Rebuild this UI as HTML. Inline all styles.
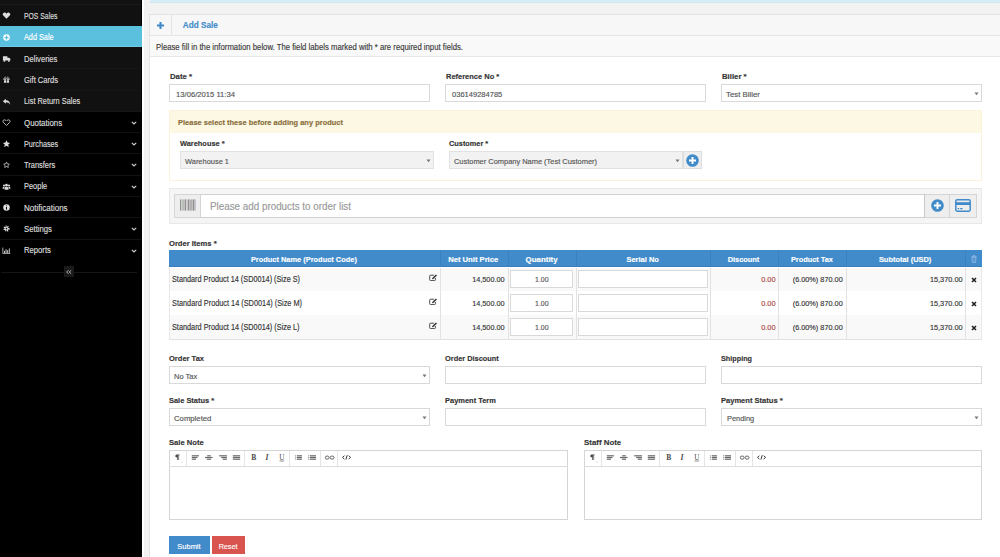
<!DOCTYPE html>
<html><head><meta charset="utf-8"><title>Add Sale</title>
<style>
html,body{margin:0;padding:0;width:1000px;height:557px;overflow:hidden;background:#fff;}
body{position:relative;font-family:"Liberation Sans", sans-serif;}
.a{position:absolute;}
.t{position:absolute;white-space:nowrap;line-height:1;font-family:"Liberation Sans", sans-serif;-webkit-text-stroke:0.15px currentColor;}
</style></head><body>
<svg width="0" height="0" style="position:absolute"><defs>
<g id="i-heart"><path d="M5 7.6 L1.4 4 C0.3 2.9 0.6 1 2.2 0.7 C3.4 0.5 4.3 1.2 5 2 C5.7 1.2 6.6 0.5 7.8 0.7 C9.4 1 9.7 2.9 8.6 4 Z" stroke="none"/></g>
<g id="i-hearto"><path d="M5 7.2 L1.6 3.9 C0.6 2.9 0.9 1.2 2.3 1 C3.4 0.8 4.3 1.5 5 2.3 C5.7 1.5 6.6 0.8 7.7 1 C9.1 1.2 9.4 2.9 8.4 3.9 Z" fill="none" stroke-width="0.9"/></g>
<g id="i-pluscircle"><circle cx="5" cy="4" r="3.6" stroke="none"/><path d="M5 1.8V6.2M2.8 4H7.2" stroke="#5bc0de" stroke-width="1.5"/></g>
<g id="i-truck"><path d="M1 1.5H6V6H1Z M6 3H8.2L9.3 4.5V6H6Z" stroke="none"/><circle cx="2.7" cy="6.6" r="1" stroke="none"/><circle cx="7.6" cy="6.6" r="1" stroke="none"/></g>
<g id="i-gift"><path d="M1.5 2.8H8.5V4.3H1.5Z M2.2 4.6H7.8V7.6H2.2Z" stroke="none"/><path d="M5 2.8V7.6" stroke="#111" stroke-width="0.8"/><path d="M5 2.6C4 0.5 2.5 1 3 2.5 M5 2.6C6 0.5 7.5 1 7 2.5" fill="none" stroke-width="0.7"/></g>
<g id="i-reply"><path d="M1 3.5L4.2 0.8V2.4C7.5 2.4 9 4.5 9 7.5C8 5.5 6.5 4.7 4.2 4.7V6.3Z" stroke="none"/></g>
<g id="i-star"><path d="M5 0.3L6.2 2.9L9 3.2L6.9 5.1L7.5 7.9L5 6.5L2.5 7.9L3.1 5.1L1 3.2L3.8 2.9Z" stroke="none"/></g>
<g id="i-staro"><path d="M5 1.2L6 3.3L8.2 3.6L6.5 5.1L7 7.2L5 6.1L3 7.2L3.5 5.1L1.8 3.6L4 3.3Z" fill="none" stroke-width="0.8"/></g>
<g id="i-users"><circle cx="5" cy="2.4" r="1.5" stroke="none"/><circle cx="2.2" cy="2.8" r="1.1" stroke="none"/><circle cx="7.8" cy="2.8" r="1.1" stroke="none"/><path d="M2.8 7.5C2.8 5 3.6 4.3 5 4.3C6.4 4.3 7.2 5 7.2 7.5Z M0.6 6.5C0.6 4.8 1.2 4.2 2.2 4.2C2.8 4.2 3 4.4 3 4.4C2.5 5 2.4 5.8 2.4 6.5Z M9.4 6.5C9.4 4.8 8.8 4.2 7.8 4.2C7.2 4.2 7 4.4 7 4.4C7.5 5 7.6 5.8 7.6 6.5Z" stroke="none"/></g>
<g id="i-info"><circle cx="5" cy="4" r="3.6" stroke="none"/><path d="M5 3.4V6.2M5 1.7V2.5" stroke="#000" stroke-width="1.1"/></g>
<g id="i-cog"><circle cx="5" cy="4" r="2.6" fill="none" stroke-width="1.6" stroke-dasharray="1.1 0.9"/><circle cx="5" cy="4" r="2.1" stroke="none"/><circle cx="5" cy="4" r="0.9" fill="#000" stroke="none"/></g>
<g id="i-chart"><path d="M0.9 0.6V7.3H9.3" fill="none" stroke-width="0.8"/><path d="M2.2 4.2H3.2V6.8H2.2Z M4 2.4H5V6.8H4Z M5.8 3.6H6.8V6.8H5.8Z M7.6 1.6H8.6V6.8H7.6Z" stroke="none"/></g>
<g id="i-bluplus"><circle cx="6.5" cy="6.5" r="6.3" fill="#428bca"/><path d="M6.5 3V10M3 6.5H10" stroke="#fff" stroke-width="1.9"/></g>
<g id="i-barcode"><rect x="0" y="0" width="16" height="12" fill="#fff"/><rect x="0.3" y="0.3" width="0.8" height="11.4" fill="#666"/><rect x="1.6" y="0.3" width="0.5" height="11.4" fill="#8a8"/><rect x="2.6" y="0.3" width="0.9" height="11.4" fill="#777"/><rect x="4.0" y="0.3" width="0.6" height="11.4" fill="#999"/><rect x="5.1" y="0.3" width="1.0" height="11.4" fill="#888"/><rect x="6.6" y="0.3" width="0.6" height="11.4" fill="#a9a"/><rect x="7.7" y="0.3" width="1.1" height="11.4" fill="#777"/><rect x="9.3" y="0.3" width="0.6" height="11.4" fill="#999"/><rect x="10.4" y="0.3" width="1.2" height="11.4" fill="#808080"/><rect x="12.1" y="0.3" width="0.6" height="11.4" fill="#999"/><rect x="13.2" y="0.3" width="1.1" height="11.4" fill="#777"/><rect x="14.7" y="0.3" width="0.8" height="11.4" fill="#889"/></g>
<g id="i-card"><rect x="0.8" y="0.8" width="14.4" height="11.4" rx="1.4" fill="none" stroke="#428bca" stroke-width="1.5"/><rect x="0.8" y="3.2" width="14.4" height="2.8" fill="#428bca"/><path d="M2.6 9.6H4.2M5.2 9.6H7.6" stroke="#428bca" stroke-width="1.1"/></g>
<g id="i-trash"><path d="M0.4 1.6H5.6 M2 1.4V0.6H4V1.4" fill="none" stroke="#8fb8e2" stroke-width="0.8"/><path d="M1 2.3H5L4.6 7.4H1.4Z" fill="none" stroke="#8fb8e2" stroke-width="0.9"/><path d="M3 3V6.6" stroke="#8fb8e2" stroke-width="0.6"/></g>
<g id="i-edit"><path d="M5 1.2H1.6Q0.7 1.2 0.7 2.1V5.8Q0.7 6.6 1.6 6.6H5.6Q6.4 6.6 6.4 5.8V4" fill="none" stroke="#444" stroke-width="0.95"/><path d="M3 5.2L3.3 3.9L6.9 0.4L8 1.5L4.4 5Z" fill="#333"/></g>
<g id="i-toolbar" stroke="none">
  <path d="M8.2 4.4H10.6V5.2H10.1V10H9.4V5.2H8.9V10H8.2V7.4C6.9 7.3 6.3 6.6 6.3 5.9C6.3 5 7 4.4 8.2 4.4Z" fill="#444"/>
  <rect x="12.6" y="11.7" width="0.8" height="0.8" fill="#aaa"/>
  <g fill="#6a6a6a">
  <rect x="22.8" y="5.2" width="7.1" height="1.2"/><rect x="22.8" y="6.9" width="5.7" height="1.2"/><rect x="22.8" y="8.6" width="4.2" height="1.2"/>
  <rect x="38.2" y="5.2" width="3.6" height="1.2"/><rect x="36" y="6.9" width="7.5" height="1.2"/><rect x="37.8" y="8.6" width="4.2" height="1.2"/>
  <rect x="50.2" y="5.2" width="7.7" height="1.2"/><rect x="52.2" y="6.9" width="5.7" height="1.2"/><rect x="53.7" y="8.6" width="4.2" height="1.2"/>
  <rect x="63.8" y="5.2" width="7.3" height="1.2"/><rect x="63.8" y="6.9" width="7.3" height="1.2"/><rect x="63.8" y="8.6" width="7.3" height="1.2"/>
  <rect x="125.9" y="5.2" width="1.3" height="1.2" fill="#aaa"/><rect x="127.9" y="5.2" width="5" height="1.2"/><rect x="125.9" y="6.9" width="1.3" height="1.2" fill="#aaa"/><rect x="127.9" y="6.9" width="5" height="1.2"/><rect x="125.9" y="8.6" width="1.3" height="1.2" fill="#aaa"/><rect x="127.9" y="8.6" width="5" height="1.2"/>
  <rect x="138.9" y="5.2" width="1.5" height="1.2" fill="#aaa"/><rect x="141" y="5.2" width="6" height="1.2"/><rect x="138.9" y="6.9" width="1.5" height="1.2" fill="#aaa"/><rect x="141" y="6.9" width="6" height="1.2"/><rect x="138.9" y="8.6" width="1.5" height="1.2" fill="#aaa"/><rect x="141" y="8.6" width="6" height="1.2"/>
  </g>
  <text x="82.2" y="10.2" font-family="Liberation Serif" font-size="7.6" font-weight="bold" fill="#4a4a4a">B</text>
  <text x="96.6" y="10.2" font-family="Liberation Serif" font-size="7.6" font-style="italic" font-weight="bold" fill="#4a4a4a">I</text>
  <text x="110.2" y="9.8" font-family="Liberation Serif" font-size="7.2" fill="#4a4a4a">U</text>
  <rect x="110.5" y="10.6" width="4.6" height="0.8" fill="#777"/>
  <g fill="none" stroke="#555" stroke-width="0.9"><ellipse cx="158.2" cy="7.6" rx="1.9" ry="1.6"/><ellipse cx="163.1" cy="7.6" rx="1.9" ry="1.6"/></g>
  <rect x="164.3" y="11.8" width="0.8" height="0.8" fill="#aaa"/>
  <path d="M175.4 5.7L173.5 7.4L175.4 9.1 M179.7 5.7L181.6 7.4L179.7 9.1 M178.2 5.2L176.9 9.6" fill="none" stroke="#3a3a3a" stroke-width="1"/>
</g>
</defs></svg>
<div class="a" style="left:0px;top:0px;width:142.00px;height:557.00px;background:#000"></div>
<div class="a" style="left:0px;top:0px;width:141.00px;height:4.00px;background:#111"></div>
<div class="a" style="left:0px;top:4px;width:141.00px;height:22.00px;background:#111"></div>
<div class="a" style="left:0px;top:26px;width:142.00px;height:21.00px;background:#5bc0de"></div>
<div class="a" style="left:0px;top:47px;width:141.00px;height:21.00px;background:#111"></div>
<div class="a" style="left:0px;top:68px;width:141.00px;height:22.00px;background:#111"></div>
<div class="a" style="left:0px;top:90px;width:141.00px;height:21.00px;background:#111"></div>
<div class="a" style="left:0px;top:111px;width:141.00px;height:21.00px;background:#000"></div>
<div class="a" style="left:0px;top:132px;width:141.00px;height:21.00px;background:#000"></div>
<div class="a" style="left:0px;top:153px;width:141.00px;height:22.00px;background:#000"></div>
<div class="a" style="left:0px;top:175px;width:141.00px;height:21.00px;background:#000"></div>
<div class="a" style="left:0px;top:196px;width:141.00px;height:21.00px;background:#000"></div>
<div class="a" style="left:0px;top:217px;width:141.00px;height:22.00px;background:#000"></div>
<div class="a" style="left:0px;top:239px;width:141.00px;height:21.00px;background:#000"></div>
<div class="a" style="left:0px;top:46px;width:142.00px;height:1.00px;background:#6fcbe8"></div>
<div class="a" style="left:0px;top:68px;width:141.00px;height:1.00px;background:#161616"></div>
<div class="a" style="left:0px;top:90px;width:141.00px;height:1.00px;background:#161616"></div>
<div class="a" style="left:0px;top:111px;width:141.00px;height:1.00px;background:#161616"></div>
<div class="a" style="left:0px;top:132px;width:141.00px;height:1.00px;background:#121212"></div>
<div class="a" style="left:0px;top:153px;width:141.00px;height:1.00px;background:#121212"></div>
<div class="a" style="left:0px;top:175px;width:141.00px;height:1.00px;background:#121212"></div>
<div class="a" style="left:0px;top:196px;width:141.00px;height:1.00px;background:#121212"></div>
<div class="a" style="left:0px;top:217px;width:141.00px;height:1.00px;background:#121212"></div>
<div class="a" style="left:0px;top:239px;width:141.00px;height:1.00px;background:#121212"></div>
<div class="a" style="left:0px;top:4px;width:141.00px;height:1.00px;background:#1b1b1b"></div>
<div class="t" style="left:24.00px;top:12.09px;font-size:8.4px;color:#ddd;transform:scaleX(0.8153);transform-origin:left 0;">POS Sales</div>
<svg class="a" style="left:2px;top:12.30px" width="9" height="7.2" viewBox="0 0 10 8"><use href="#i-heart" fill="#ddd" stroke="#ddd"/></svg>
<div class="t" style="left:24.00px;top:33.39px;font-size:8.4px;color:#fff;transform:scaleX(0.8706);transform-origin:left 0;">Add Sale</div>
<svg class="a" style="left:2px;top:33.60px" width="9" height="7.2" viewBox="0 0 10 8"><use href="#i-pluscircle" fill="#fff" stroke="#fff"/></svg>
<div class="t" style="left:24.00px;top:54.69px;font-size:8.4px;color:#ddd;transform:scaleX(0.9081);transform-origin:left 0;">Deliveries</div>
<svg class="a" style="left:2px;top:54.90px" width="9" height="7.2" viewBox="0 0 10 8"><use href="#i-truck" fill="#ddd" stroke="#ddd"/></svg>
<div class="t" style="left:24.00px;top:75.99px;font-size:8.4px;color:#ddd;transform:scaleX(0.9018);transform-origin:left 0;">Gift Cards</div>
<svg class="a" style="left:2px;top:76.20px" width="9" height="7.2" viewBox="0 0 10 8"><use href="#i-gift" fill="#ddd" stroke="#ddd"/></svg>
<div class="t" style="left:24.00px;top:97.29px;font-size:8.4px;color:#ddd;transform:scaleX(0.8811);transform-origin:left 0;">List Return Sales</div>
<svg class="a" style="left:2px;top:97.50px" width="9" height="7.2" viewBox="0 0 10 8"><use href="#i-reply" fill="#ddd" stroke="#ddd"/></svg>
<div class="t" style="left:24.00px;top:118.59px;font-size:8.4px;color:#ddd;transform:scaleX(0.9428);transform-origin:left 0;">Quotations</div>
<svg class="a" style="left:2px;top:118.80px" width="9" height="7.2" viewBox="0 0 10 8"><use href="#i-hearto" fill="#ddd" stroke="#ddd"/></svg>
<svg class="a" style="left:130.5px;top:120.80px" width="6" height="4" viewBox="0 0 6 4"><path d="M0.8 0.8 L3 3 L5.2 0.8" fill="none" stroke="#ccc" stroke-width="1.2"/></svg>
<div class="t" style="left:24.00px;top:139.89px;font-size:8.4px;color:#ddd;transform:scaleX(0.8641);transform-origin:left 0;">Purchases</div>
<svg class="a" style="left:2px;top:140.10px" width="9" height="7.2" viewBox="0 0 10 8"><use href="#i-star" fill="#ddd" stroke="#ddd"/></svg>
<svg class="a" style="left:130.5px;top:142.10px" width="6" height="4" viewBox="0 0 6 4"><path d="M0.8 0.8 L3 3 L5.2 0.8" fill="none" stroke="#ccc" stroke-width="1.2"/></svg>
<div class="t" style="left:24.00px;top:161.19px;font-size:8.4px;color:#ddd;transform:scaleX(0.8898);transform-origin:left 0;">Transfers</div>
<svg class="a" style="left:2px;top:161.40px" width="9" height="7.2" viewBox="0 0 10 8"><use href="#i-staro" fill="#ddd" stroke="#ddd"/></svg>
<svg class="a" style="left:130.5px;top:163.40px" width="6" height="4" viewBox="0 0 6 4"><path d="M0.8 0.8 L3 3 L5.2 0.8" fill="none" stroke="#ccc" stroke-width="1.2"/></svg>
<div class="t" style="left:24.00px;top:182.49px;font-size:8.4px;color:#ddd;transform:scaleX(0.8896);transform-origin:left 0;">People</div>
<svg class="a" style="left:2px;top:182.70px" width="9" height="7.2" viewBox="0 0 10 8"><use href="#i-users" fill="#ddd" stroke="#ddd"/></svg>
<svg class="a" style="left:130.5px;top:184.70px" width="6" height="4" viewBox="0 0 6 4"><path d="M0.8 0.8 L3 3 L5.2 0.8" fill="none" stroke="#ccc" stroke-width="1.2"/></svg>
<div class="t" style="left:24.00px;top:203.79px;font-size:8.4px;color:#ddd;transform:scaleX(0.9556);transform-origin:left 0;">Notifications</div>
<svg class="a" style="left:2px;top:204.00px" width="9" height="7.2" viewBox="0 0 10 8"><use href="#i-info" fill="#ddd" stroke="#ddd"/></svg>
<div class="t" style="left:24.00px;top:225.09px;font-size:8.4px;color:#ddd;transform:scaleX(0.9251);transform-origin:left 0;">Settings</div>
<svg class="a" style="left:2px;top:225.30px" width="9" height="7.2" viewBox="0 0 10 8"><use href="#i-cog" fill="#ddd" stroke="#ddd"/></svg>
<svg class="a" style="left:130.5px;top:227.30px" width="6" height="4" viewBox="0 0 6 4"><path d="M0.8 0.8 L3 3 L5.2 0.8" fill="none" stroke="#ccc" stroke-width="1.2"/></svg>
<div class="t" style="left:24.00px;top:246.39px;font-size:8.4px;color:#ddd;transform:scaleX(0.9172);transform-origin:left 0;">Reports</div>
<svg class="a" style="left:2px;top:246.60px" width="9" height="7.2" viewBox="0 0 10 8"><use href="#i-chart" fill="#ddd" stroke="#ddd"/></svg>
<svg class="a" style="left:130.5px;top:248.60px" width="6" height="4" viewBox="0 0 6 4"><path d="M0.8 0.8 L3 3 L5.2 0.8" fill="none" stroke="#ccc" stroke-width="1.2"/></svg>
<div class="a" style="left:1px;top:272px;width:136.00px;height:1.00px;background:#161616"></div>
<div class="a" style="left:64px;top:266px;width:10.00px;height:11.00px;background:#1a1a1a"></div>
<svg class="a" style="left:65px;top:268px" width="8" height="8" viewBox="0 0 8 8"><path d="M3.6 2.4 L1.6 4 L3.6 5.6 M6.2 2.4 L4.2 4 L6.2 5.6" fill="none" stroke="#bbb" stroke-width="0.9"/></svg>
<div class="a" style="left:142px;top:0px;width:2.00px;height:557.00px;background:#fff"></div>
<div class="a" style="left:144px;top:0px;width:856.00px;height:557.00px;background:#f2f2f2"></div>
<div class="a" style="left:150px;top:0px;width:850.00px;height:3.00px;background:#d9edf7"></div>
<div class="a" style="left:150px;top:2px;width:850.00px;height:1.00px;background:#cde8f3"></div>
<div class="a" style="left:149px;top:14px;width:851.00px;height:543.00px;background:#fff;border-left:1px solid #e3e3e3;border-top:1px solid #e3e3e3"></div>
<div class="a" style="left:150px;top:15px;width:850.00px;height:20.00px;background:#f7f7f7"></div>
<div class="a" style="left:171px;top:15px;width:1.00px;height:20.00px;background:#e5e5e5"></div>
<div class="a" style="left:150px;top:35px;width:850.00px;height:1.00px;background:#e5e5e5"></div>
<div class="a" style="left:150px;top:36px;width:850.00px;height:20.00px;background:#f9f9f9"></div>
<div class="a" style="left:150px;top:56px;width:850.00px;height:1.00px;background:#e8e8e8"></div>
<svg class="a" style="left:157px;top:21.5px" width="7" height="7" viewBox="0 0 7 7"><path d="M3.5 0V7M0 3.5H7" stroke="#428bca" stroke-width="2.1"/></svg>
<div class="t" style="left:182.80px;top:21.86px;font-size:8.2px;font-weight:bold;color:#428bca;">Add Sale</div>
<div class="t" style="left:155.80px;top:43.12px;font-size:8.6px;color:#3a3a3a;transform:scaleX(0.9005);transform-origin:left 0;">Please fill in the information below. The field labels marked with * are required input fields.</div>
<div class="t" style="left:169.50px;top:73.11px;font-size:7.9px;font-weight:bold;color:#333;transform:scaleX(0.9832);transform-origin:left 0;">Date *</div>
<div class="t" style="left:445.80px;top:73.11px;font-size:7.9px;font-weight:bold;color:#333;transform:scaleX(0.9476);transform-origin:left 0;">Reference No *</div>
<div class="t" style="left:721.70px;top:73.11px;font-size:7.9px;font-weight:bold;color:#333;transform:scaleX(0.9840);transform-origin:left 0;">Biller *</div>
<div class="a" style="left:169px;top:84px;width:261.00px;height:18.00px;background:#fff;border:1px solid #d9d9d9;box-sizing:border-box"></div>
<div class="t" style="left:176.40px;top:90.87px;font-size:7.6px;color:#555;transform:scaleX(1.0075);transform-origin:left 0;">13/06/2015 11:34</div>
<div class="a" style="left:445px;top:84px;width:261.00px;height:18.00px;background:#fff;border:1px solid #d9d9d9;box-sizing:border-box"></div>
<div class="t" style="left:452.20px;top:90.87px;font-size:7.6px;color:#555;transform:scaleX(0.9924);transform-origin:left 0;">036149284785</div>
<div class="a" style="left:721px;top:84px;width:261.00px;height:18.00px;background:#fff;border:1px solid #d9d9d9;box-sizing:border-box"></div>
<div class="t" style="left:726.20px;top:90.87px;font-size:7.6px;color:#555;transform:scaleX(1.0297);transform-origin:left 0;">Test Biller</div>
<svg class="a" style="left:973.50px;top:91.50px" width="5" height="4" viewBox="0 0 5 4"><path d="M0.5 0.5H4.5L2.5 3.2Z" fill="#777"/></svg>
<div class="a" style="left:169px;top:110px;width:813.00px;height:71.00px;background:#fff;border:1px solid #fcf2dc;box-sizing:border-box"></div>
<div class="a" style="left:170px;top:111px;width:811.00px;height:22.00px;background:#fcf8e3"></div>
<div class="t" style="left:178.00px;top:118.87px;font-size:7.6px;font-weight:bold;color:#8a6d3b;transform:scaleX(0.9848);transform-origin:left 0;">Please select these before adding any product</div>
<div class="t" style="left:180.30px;top:140.37px;font-size:7.6px;font-weight:bold;color:#333;transform:scaleX(0.9755);transform-origin:left 0;">Warehouse *</div>
<div class="t" style="left:449.40px;top:140.37px;font-size:7.6px;font-weight:bold;color:#333;transform:scaleX(0.9675);transform-origin:left 0;">Customer *</div>
<div class="a" style="left:180px;top:151px;width:254.00px;height:18.00px;background:#f2f2f2;border:1px solid #e2e2e2;box-sizing:border-box"></div>
<div class="t" style="left:184.80px;top:157.87px;font-size:7.6px;color:#555;transform:scaleX(0.9802);transform-origin:left 0;">Warehouse 1</div>
<svg class="a" style="left:425.50px;top:158.50px" width="5" height="4" viewBox="0 0 5 4"><path d="M0.5 0.5H4.5L2.5 3.2Z" fill="#777"/></svg>
<div class="a" style="left:449px;top:151px;width:234.00px;height:18.00px;background:#f2f2f2;border:1px solid #e2e2e2;box-sizing:border-box"></div>
<div class="t" style="left:454.00px;top:157.87px;font-size:7.6px;color:#555;transform:scaleX(0.9793);transform-origin:left 0;">Customer Company Name (Test Customer)</div>
<svg class="a" style="left:674.50px;top:158.50px" width="5" height="4" viewBox="0 0 5 4"><path d="M0.5 0.5H4.5L2.5 3.2Z" fill="#777"/></svg>
<div class="a" style="left:683px;top:151px;width:19.00px;height:18.00px;background:#eee;border:1px solid #ddd;box-sizing:border-box"></div>
<svg class="a" style="left:686px;top:153.6px" width="13" height="13" viewBox="0 0 13 13"><use href="#i-bluplus"/></svg>
<div class="a" style="left:169px;top:188px;width:813.00px;height:36.00px;background:#f5f5f5;border:1px solid #e8e8e8;box-sizing:border-box"></div>
<div class="a" style="left:174px;top:194px;width:803.00px;height:24.00px;background:#fff;border:1px solid #d0d0d0;box-sizing:border-box"></div>
<div class="a" style="left:174px;top:194px;width:27.00px;height:24.00px;background:#eee;border:1px solid #d5d5d5;box-sizing:border-box"></div>
<div class="a" style="left:924px;top:194px;width:53.00px;height:24.00px;background:#eee;border:1px solid #d5d5d5;box-sizing:border-box"></div>
<div class="a" style="left:924px;top:194px;width:1.00px;height:24.00px;background:#c8c8c8"></div>
<div class="a" style="left:949px;top:194px;width:1.00px;height:24.00px;background:#d5d5d5"></div>
<svg class="a" style="left:179.5px;top:199.3px" width="16" height="12" viewBox="0 0 16 12"><use href="#i-barcode"/></svg>
<div class="t" style="left:209.60px;top:202.14px;font-size:10px;color:#999;transform:scaleX(0.9831);transform-origin:left 0;">Please add products to order list</div>
<svg class="a" style="left:930.9px;top:199px" width="13" height="13" viewBox="0 0 13 13"><use href="#i-bluplus"/></svg>
<svg class="a" style="left:955px;top:199px" width="16" height="13" viewBox="0 0 16 13"><use href="#i-card"/></svg>
<div class="t" style="left:169.40px;top:240.08px;font-size:7.7px;font-weight:bold;color:#333;transform:scaleX(0.9859);transform-origin:left 0;">Order Items *</div>
<div class="a" style="left:169px;top:250px;width:813.00px;height:17.00px;background:#428bca"></div>
<div class="a" style="left:169px;top:266px;width:813.00px;height:1.00px;background:#3a7dbd"></div>
<div class="a" style="left:169px;top:267px;width:813.00px;height:24.00px;background:#f9f9f9"></div>
<div class="a" style="left:169px;top:291px;width:813.00px;height:1.00px;background:#e2e2e2"></div>
<div class="a" style="left:169px;top:291px;width:813.00px;height:24.00px;background:#fff"></div>
<div class="a" style="left:169px;top:315px;width:813.00px;height:1.00px;background:#e2e2e2"></div>
<div class="a" style="left:169px;top:315px;width:813.00px;height:24.00px;background:#f9f9f9"></div>
<div class="a" style="left:169px;top:339px;width:813.00px;height:1.00px;background:#e2e2e2"></div>
<div class="a" style="left:169px;top:268px;width:1.00px;height:72.00px;background:#e8e8e8"></div>
<div class="a" style="left:981px;top:268px;width:1.00px;height:72.00px;background:#e8e8e8"></div>
<div class="a" style="left:169px;top:267px;width:813.00px;height:1.00px;background:#fff"></div>
<div class="a" style="left:440px;top:250px;width:1.00px;height:17.00px;background:#3b80c0"></div>
<div class="a" style="left:440px;top:268px;width:1.00px;height:71.00px;background:#e2e2e2"></div>
<div class="a" style="left:508px;top:250px;width:1.00px;height:17.00px;background:#3b80c0"></div>
<div class="a" style="left:508px;top:268px;width:1.00px;height:71.00px;background:#e2e2e2"></div>
<div class="a" style="left:576px;top:250px;width:1.00px;height:17.00px;background:#3b80c0"></div>
<div class="a" style="left:576px;top:268px;width:1.00px;height:71.00px;background:#e2e2e2"></div>
<div class="a" style="left:710px;top:250px;width:1.00px;height:17.00px;background:#3b80c0"></div>
<div class="a" style="left:710px;top:268px;width:1.00px;height:71.00px;background:#e2e2e2"></div>
<div class="a" style="left:778px;top:250px;width:1.00px;height:17.00px;background:#3b80c0"></div>
<div class="a" style="left:778px;top:268px;width:1.00px;height:71.00px;background:#e2e2e2"></div>
<div class="a" style="left:846px;top:250px;width:1.00px;height:17.00px;background:#3b80c0"></div>
<div class="a" style="left:846px;top:268px;width:1.00px;height:71.00px;background:#e2e2e2"></div>
<div class="a" style="left:965px;top:250px;width:1.00px;height:17.00px;background:#3b80c0"></div>
<div class="a" style="left:965px;top:268px;width:1.00px;height:71.00px;background:#e2e2e2"></div>
<div class="t" style="left:249.41px;top:256.28px;font-size:7.7px;font-weight:bold;color:#fff;transform:scaleX(0.9656);transform-origin:center 0;">Product Name (Product Code)</div>
<div class="t" style="left:448.39px;top:256.28px;font-size:7.7px;font-weight:bold;color:#fff;transform:scaleX(0.9916);transform-origin:center 0;">Net Unit Price</div>
<div class="t" style="left:526.01px;top:256.28px;font-size:7.7px;font-weight:bold;color:#fff;transform:scaleX(1.0261);transform-origin:center 0;">Quantity</div>
<div class="t" style="left:626.04px;top:256.28px;font-size:7.7px;font-weight:bold;color:#fff;transform:scaleX(0.9722);transform-origin:center 0;">Serial No</div>
<div class="t" style="left:727.35px;top:256.28px;font-size:7.7px;font-weight:bold;color:#fff;transform:scaleX(0.9608);transform-origin:center 0;">Discount</div>
<div class="t" style="left:789.87px;top:256.28px;font-size:7.7px;font-weight:bold;color:#fff;transform:scaleX(0.9576);transform-origin:center 0;">Product Tax</div>
<div class="t" style="left:878.28px;top:256.28px;font-size:7.7px;font-weight:bold;color:#fff;transform:scaleX(0.9662);transform-origin:center 0;">Subtotal (USD)</div>
<svg class="a" style="left:970.5px;top:255px" width="6" height="8" viewBox="0 0 6 8"><use href="#i-trash"/></svg>
<div class="t" style="left:172.20px;top:276.16px;font-size:8.2px;color:#333;transform:scaleX(0.8900);transform-origin:left 0;">Standard Product 14 (SD0014) (Size S)</div>
<svg class="a" style="left:429px;top:273.60px" width="9" height="7" viewBox="0 0 9 7"><use href="#i-edit"/></svg>
<div class="t" style="left:469.01px;top:276.33px;font-size:8.0px;color:#333;transform:scaleX(0.9103);transform-origin:right 0;">14,500.00</div>
<div class="a" style="left:510px;top:270px;width:63.00px;height:18.00px;background:#fff;border:1px solid #d9d9d9;box-sizing:border-box"></div>
<div class="t" style="left:533.91px;top:276.33px;font-size:8.0px;color:#555;transform:scaleX(0.8666);transform-origin:center 0;">1.00</div>
<div class="a" style="left:578px;top:270px;width:130.00px;height:18.00px;background:#fff;border:1px solid #d9d9d9;box-sizing:border-box"></div>
<div class="t" style="left:759.92px;top:276.33px;font-size:8.0px;color:#a94442;transform:scaleX(0.9244);transform-origin:right 0;">0.00</div>
<div class="t" style="left:788.30px;top:276.33px;font-size:8.0px;color:#333;transform:scaleX(0.9140);transform-origin:right 0;">(6.00%) 870.00</div>
<div class="t" style="left:927.11px;top:276.33px;font-size:8.0px;color:#333;transform:scaleX(0.9187);transform-origin:right 0;">15,370.00</div>
<svg class="a" style="left:970.5px;top:277.00px" width="6" height="6" viewBox="0 0 6 6"><path d="M1 1L5 5M5 1L1 5" stroke="#222" stroke-width="1.6"/></svg>
<div class="t" style="left:172.20px;top:300.16px;font-size:8.2px;color:#333;transform:scaleX(0.8955);transform-origin:left 0;">Standard Product 14 (SD0014) (Size M)</div>
<svg class="a" style="left:429px;top:297.60px" width="9" height="7" viewBox="0 0 9 7"><use href="#i-edit"/></svg>
<div class="t" style="left:469.01px;top:300.33px;font-size:8.0px;color:#333;transform:scaleX(0.9103);transform-origin:right 0;">14,500.00</div>
<div class="a" style="left:510px;top:294px;width:63.00px;height:18.00px;background:#fff;border:1px solid #d9d9d9;box-sizing:border-box"></div>
<div class="t" style="left:533.91px;top:300.33px;font-size:8.0px;color:#555;transform:scaleX(0.8666);transform-origin:center 0;">1.00</div>
<div class="a" style="left:578px;top:294px;width:130.00px;height:18.00px;background:#fff;border:1px solid #d9d9d9;box-sizing:border-box"></div>
<div class="t" style="left:759.92px;top:300.33px;font-size:8.0px;color:#a94442;transform:scaleX(0.9244);transform-origin:right 0;">0.00</div>
<div class="t" style="left:788.30px;top:300.33px;font-size:8.0px;color:#333;transform:scaleX(0.9140);transform-origin:right 0;">(6.00%) 870.00</div>
<div class="t" style="left:927.11px;top:300.33px;font-size:8.0px;color:#333;transform:scaleX(0.9187);transform-origin:right 0;">15,370.00</div>
<svg class="a" style="left:970.5px;top:301.00px" width="6" height="6" viewBox="0 0 6 6"><path d="M1 1L5 5M5 1L1 5" stroke="#222" stroke-width="1.6"/></svg>
<div class="t" style="left:172.20px;top:324.16px;font-size:8.2px;color:#333;transform:scaleX(0.8922);transform-origin:left 0;">Standard Product 14 (SD0014) (Size L)</div>
<svg class="a" style="left:429px;top:321.60px" width="9" height="7" viewBox="0 0 9 7"><use href="#i-edit"/></svg>
<div class="t" style="left:469.01px;top:324.33px;font-size:8.0px;color:#333;transform:scaleX(0.9103);transform-origin:right 0;">14,500.00</div>
<div class="a" style="left:510px;top:318px;width:63.00px;height:18.00px;background:#fff;border:1px solid #d9d9d9;box-sizing:border-box"></div>
<div class="t" style="left:533.91px;top:324.33px;font-size:8.0px;color:#555;transform:scaleX(0.8666);transform-origin:center 0;">1.00</div>
<div class="a" style="left:578px;top:318px;width:130.00px;height:18.00px;background:#fff;border:1px solid #d9d9d9;box-sizing:border-box"></div>
<div class="t" style="left:759.92px;top:324.33px;font-size:8.0px;color:#a94442;transform:scaleX(0.9244);transform-origin:right 0;">0.00</div>
<div class="t" style="left:788.30px;top:324.33px;font-size:8.0px;color:#333;transform:scaleX(0.9140);transform-origin:right 0;">(6.00%) 870.00</div>
<div class="t" style="left:927.11px;top:324.33px;font-size:8.0px;color:#333;transform:scaleX(0.9187);transform-origin:right 0;">15,370.00</div>
<svg class="a" style="left:970.5px;top:325.00px" width="6" height="6" viewBox="0 0 6 6"><path d="M1 1L5 5M5 1L1 5" stroke="#222" stroke-width="1.6"/></svg>
<div class="t" style="left:169.20px;top:355.23px;font-size:8.0px;font-weight:bold;color:#333;transform:scaleX(0.9408);transform-origin:left 0;">Order Tax</div>
<div class="t" style="left:445.40px;top:355.23px;font-size:8.0px;font-weight:bold;color:#333;transform:scaleX(0.9239);transform-origin:left 0;">Order Discount</div>
<div class="t" style="left:721.40px;top:355.23px;font-size:8.0px;font-weight:bold;color:#333;transform:scaleX(0.9059);transform-origin:left 0;">Shipping</div>
<div class="a" style="left:169px;top:366px;width:261.00px;height:18.00px;background:#fff;border:1px solid #d9d9d9;box-sizing:border-box"></div>
<div class="t" style="left:173.70px;top:372.87px;font-size:7.6px;color:#555;transform:scaleX(0.9915);transform-origin:left 0;">No Tax</div>
<svg class="a" style="left:421.50px;top:373.50px" width="5" height="4" viewBox="0 0 5 4"><path d="M0.5 0.5H4.5L2.5 3.2Z" fill="#777"/></svg>
<div class="a" style="left:445px;top:366px;width:261.00px;height:18.00px;background:#fff;border:1px solid #d9d9d9;box-sizing:border-box"></div>
<div class="a" style="left:721px;top:366px;width:261.00px;height:18.00px;background:#fff;border:1px solid #d9d9d9;box-sizing:border-box"></div>
<div class="t" style="left:169.20px;top:397.13px;font-size:8.0px;font-weight:bold;color:#333;transform:scaleX(0.9305);transform-origin:left 0;">Sale Status *</div>
<div class="t" style="left:445.40px;top:397.13px;font-size:8.0px;font-weight:bold;color:#333;transform:scaleX(0.9331);transform-origin:left 0;">Payment Term</div>
<div class="t" style="left:721.40px;top:397.13px;font-size:8.0px;font-weight:bold;color:#333;transform:scaleX(0.9425);transform-origin:left 0;">Payment Status *</div>
<div class="a" style="left:169px;top:408px;width:261.00px;height:18.00px;background:#fff;border:1px solid #d9d9d9;box-sizing:border-box"></div>
<div class="t" style="left:173.70px;top:414.87px;font-size:7.6px;color:#555;transform:scaleX(1.0181);transform-origin:left 0;">Completed</div>
<svg class="a" style="left:421.50px;top:415.50px" width="5" height="4" viewBox="0 0 5 4"><path d="M0.5 0.5H4.5L2.5 3.2Z" fill="#777"/></svg>
<div class="a" style="left:445px;top:408px;width:261.00px;height:18.00px;background:#fff;border:1px solid #d9d9d9;box-sizing:border-box"></div>
<div class="a" style="left:721px;top:408px;width:261.00px;height:18.00px;background:#fff;border:1px solid #d9d9d9;box-sizing:border-box"></div>
<div class="t" style="left:726.50px;top:414.87px;font-size:7.6px;color:#555;transform:scaleX(0.9758);transform-origin:left 0;">Pending</div>
<svg class="a" style="left:973.50px;top:415.50px" width="5" height="4" viewBox="0 0 5 4"><path d="M0.5 0.5H4.5L2.5 3.2Z" fill="#777"/></svg>
<div class="t" style="left:169.20px;top:439.13px;font-size:8.0px;font-weight:bold;color:#333;transform:scaleX(0.9515);transform-origin:left 0;">Sale Note</div>
<div class="t" style="left:583.60px;top:439.13px;font-size:8.0px;font-weight:bold;color:#333;transform:scaleX(0.9846);transform-origin:left 0;">Staff Note</div>
<div class="a" style="left:169px;top:450px;width:399.00px;height:70.00px;background:#fff;border:1px solid #d5d5d5;box-sizing:border-box"></div>
<div class="a" style="left:169px;top:466px;width:399.00px;height:1.00px;background:#ddd"></div>
<div class="a" style="left:186px;top:451px;width:1.00px;height:15.00px;background:#e5e5e5"></div>
<div class="a" style="left:244px;top:451px;width:1.00px;height:15.00px;background:#e5e5e5"></div>
<div class="a" style="left:289px;top:451px;width:1.00px;height:15.00px;background:#e5e5e5"></div>
<div class="a" style="left:320px;top:451px;width:1.00px;height:15.00px;background:#e5e5e5"></div>
<div class="a" style="left:337px;top:451px;width:1.00px;height:15.00px;background:#e5e5e5"></div>
<svg class="a" style="left:169px;top:450px" width="190" height="16" viewBox="0 0 190 16"><use href="#i-toolbar"/></svg>
<div class="a" style="left:584px;top:450px;width:398.00px;height:70.00px;background:#fff;border:1px solid #d5d5d5;box-sizing:border-box"></div>
<div class="a" style="left:584px;top:466px;width:398.00px;height:1.00px;background:#ddd"></div>
<div class="a" style="left:601px;top:451px;width:1.00px;height:15.00px;background:#e5e5e5"></div>
<div class="a" style="left:659px;top:451px;width:1.00px;height:15.00px;background:#e5e5e5"></div>
<div class="a" style="left:704px;top:451px;width:1.00px;height:15.00px;background:#e5e5e5"></div>
<div class="a" style="left:735px;top:451px;width:1.00px;height:15.00px;background:#e5e5e5"></div>
<div class="a" style="left:752px;top:451px;width:1.00px;height:15.00px;background:#e5e5e5"></div>
<svg class="a" style="left:584px;top:450px" width="190" height="16" viewBox="0 0 190 16"><use href="#i-toolbar"/></svg>
<div class="a" style="left:169px;top:536px;width:41.00px;height:18.00px;background:#428bca"></div>
<div class="t" style="left:177.43px;top:542.78px;font-size:7.7px;color:#fff;transform:scaleX(0.9692);transform-origin:center 0;">Submit</div>
<div class="a" style="left:212px;top:536px;width:33.00px;height:18.00px;background:#d9534f"></div>
<div class="t" style="left:218.15px;top:542.78px;font-size:7.7px;color:#fff;transform:scaleX(0.9306);transform-origin:center 0;">Reset</div>
</body></html>
